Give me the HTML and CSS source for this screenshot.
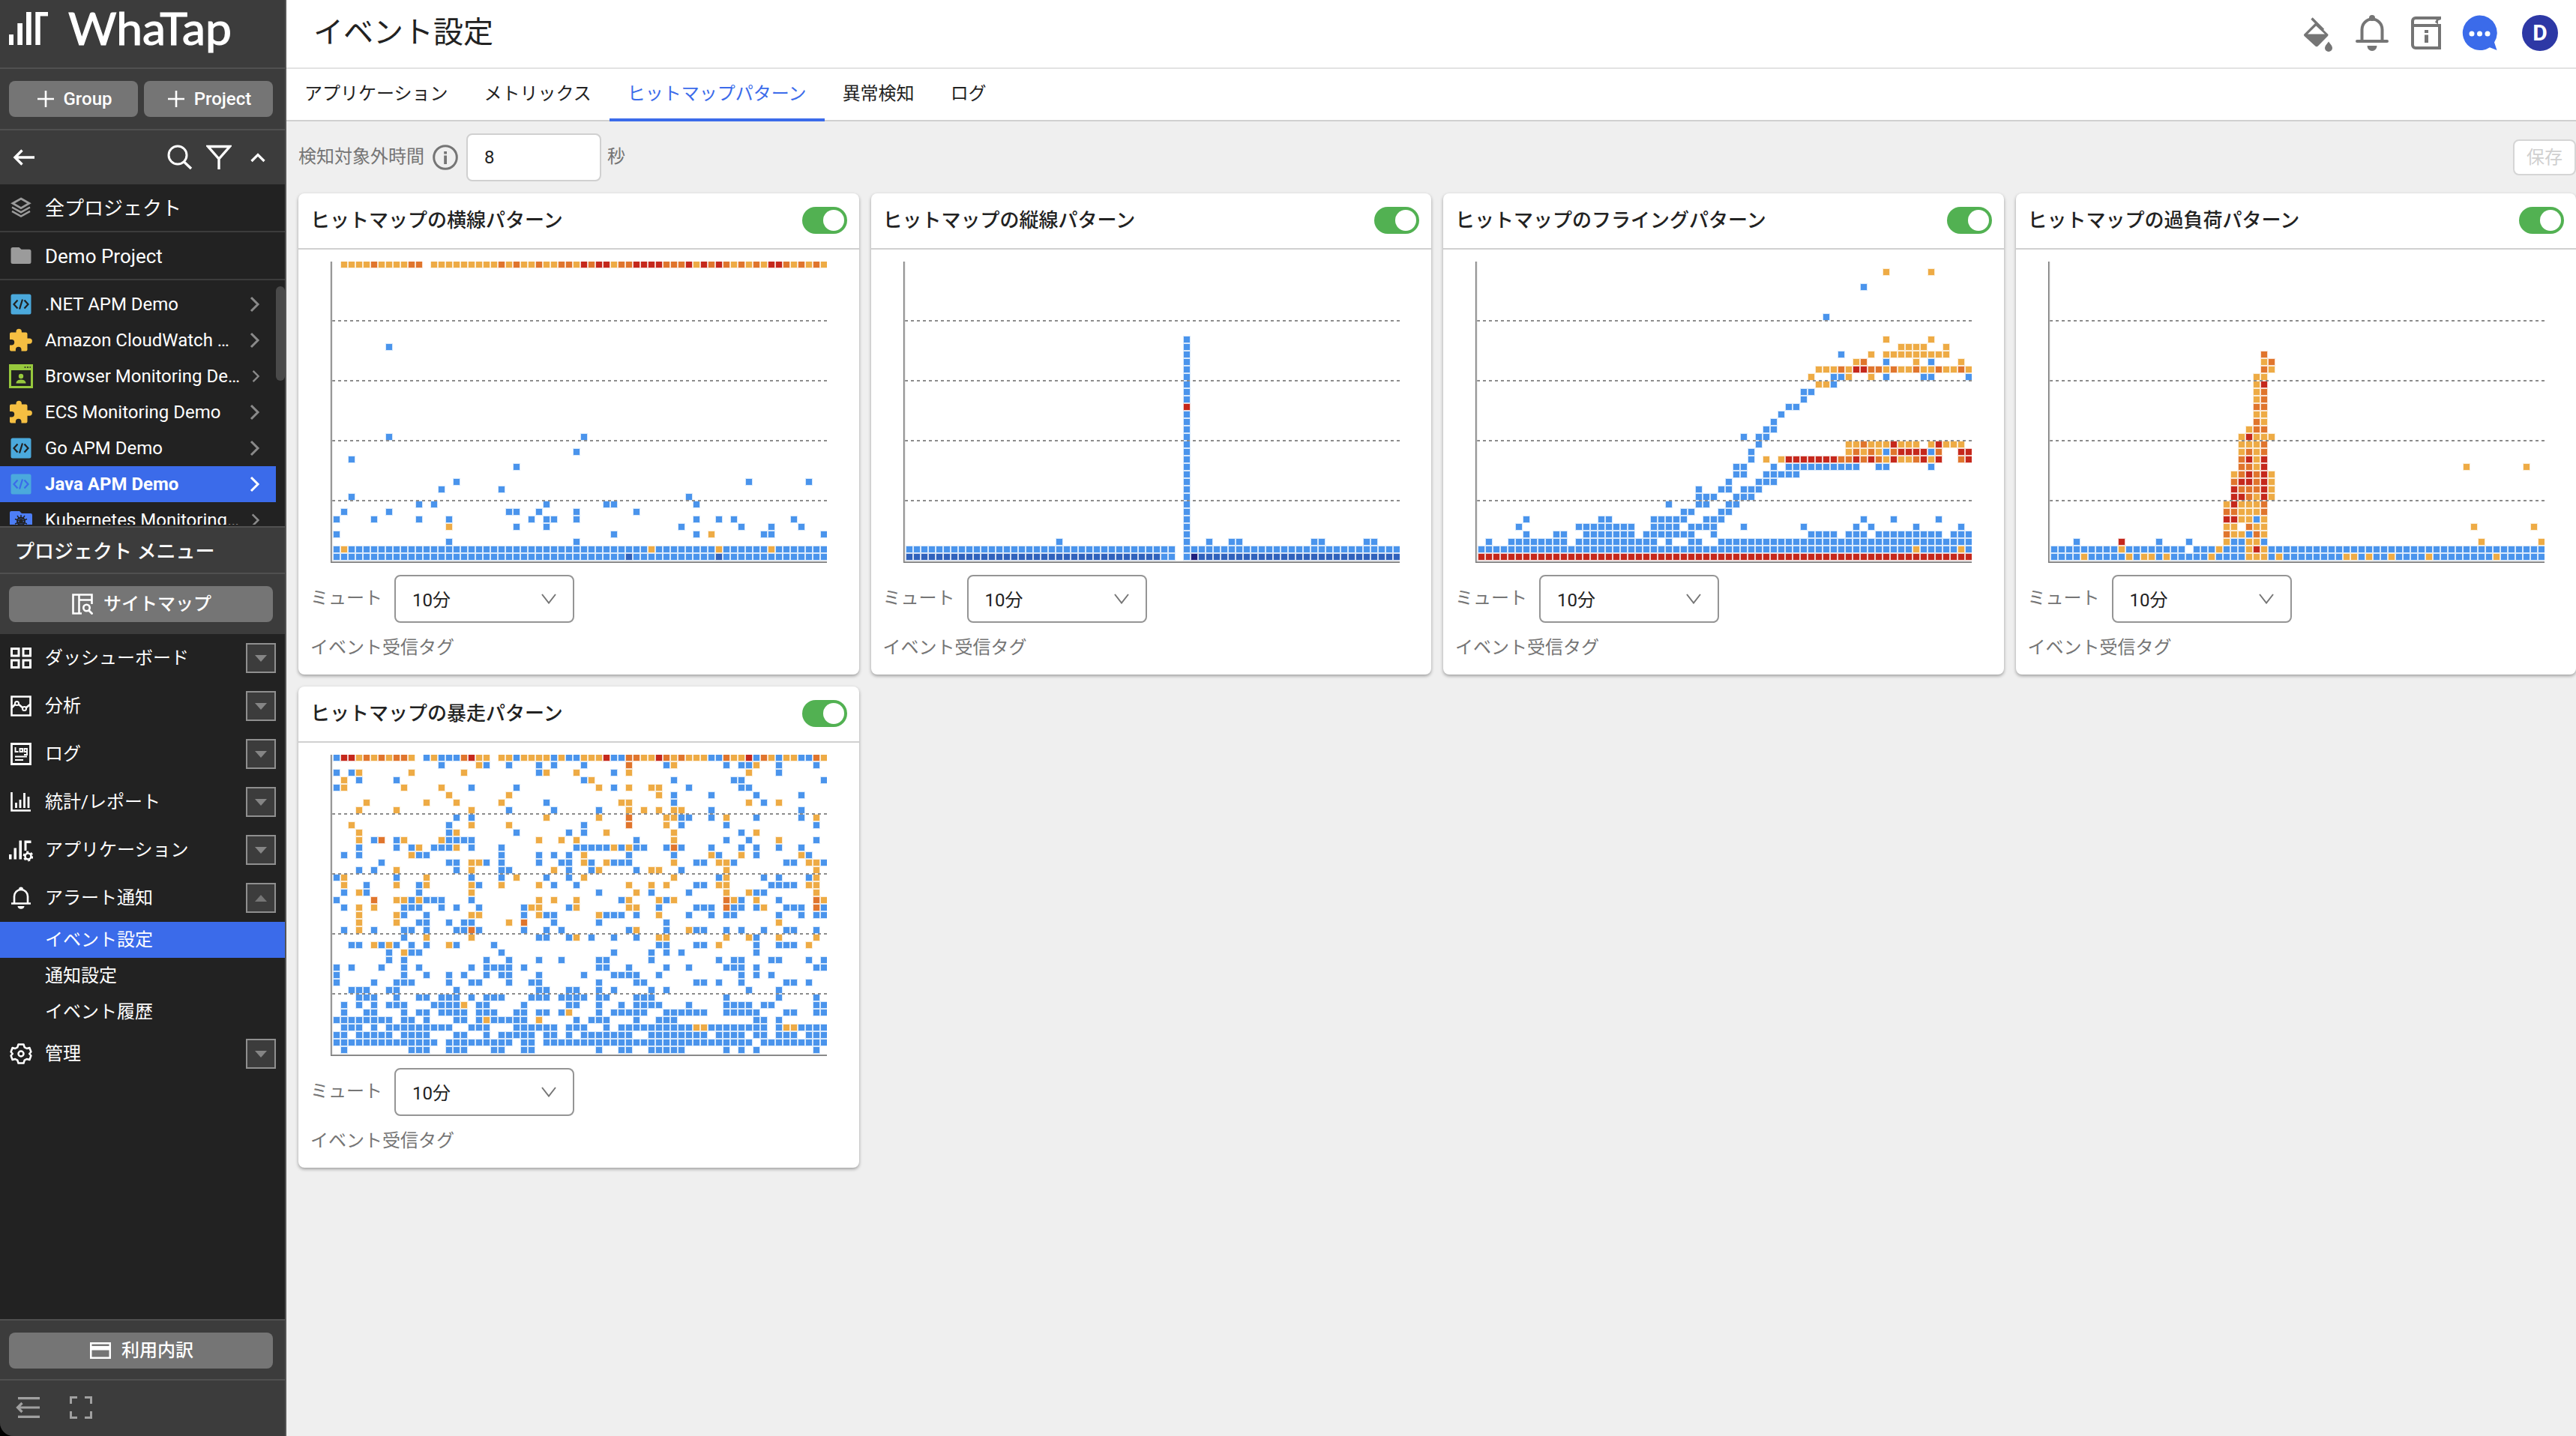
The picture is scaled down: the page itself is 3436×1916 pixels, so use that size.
FILE: index.html
```html
<!DOCTYPE html>
<html lang="ja">
<head>
<meta charset="utf-8">
<title>WhaTap - イベント設定</title>
<link rel="stylesheet" href="styles.css">
</head>
<body>
<svg class="sprite" aria-hidden="true">
  <symbol id="i-code" viewBox="0 0 32 32">
    <rect x="2.5" y="2.5" width="27" height="27" rx="2.5" fill="#4ba9dc"/>
    <path d="M11.5 10.5 6.5 16l5 5.5M20.5 10.5l5 5.5-5 5.5M18 9.5l-4 13" fill="none" stroke="currentColor" stroke-width="2.2"/>
  </symbol>
  <symbol id="i-puzzle" viewBox="0 0 32 32">
    <path fill="#f5bf42" d="M3 5.5h6.500V4.500a3.700 3.700 0 0 1 7.400 0V5.500H22.500a2 2 0 0 1 2 2V13.500h2.800a3.600 3.600 0 0 1 0 7.200H24.500V28.500a2 2 0 0 1-2 2H16.500V28.500a3.800 3.800 0 0 0-7.600 0v2H3a2 2 0 0 1-2-2V22.500H3.500a3.700 3.700 0 0 0 0-7.400H1V7.500a2 2 0 0 1 2-2z"/>
  </symbol>
  <symbol id="i-browser" viewBox="0 0 32 32">
    <path fill="#97c93d" fill-rule="evenodd" d="M0 0h32v32H0zM3 8v21h26V8z"/>
    <path d="M20.500 4h2M24 4h2M27.500 4h1.500" stroke="#222" stroke-width="1.600"/>
    <circle cx="16" cy="16" r="3.200" fill="#97c93d"/>
    <path d="M9.500 25.500c0-3.500 3-5 6.500-5s6.500 1.500 6.500 5z" fill="#97c93d"/>
  </symbol>
  <symbol id="i-kube" viewBox="0 0 32 32">
    <path fill="#4d7ef6" d="M3 4h11l3 3h12a2 2 0 0 1 2 2v21H1V6a2 2 0 0 1 2-2z"/>
    <g fill="none" stroke="#222" stroke-width="2"><circle cx="16" cy="17.500" r="5"/><path d="M16 9v17M8 14.500l16 6.500M8 21l16-6.500M11 25l10-15M11 10l10 15" stroke-width="1.400"/></g>
  </symbol>
  <symbol id="i-next" viewBox="0 0 14 24"><path d="M2 3l9 9-9 9" fill="none" stroke="currentColor" stroke-width="3"/></symbol>
  <symbol id="i-plus" viewBox="0 0 24 24"><path d="M12 1v22M1 12h22" stroke="currentColor" stroke-width="2.600"/></symbol>
  <symbol id="i-select" viewBox="0 0 20 14"><path d="M1 1l9 11.500L19 1" fill="none" stroke="#757575" stroke-width="2"/></symbol>
</svg>

<div class="app">
  <aside class="sidebar">
    <div class="brand">
      <svg class="logo" viewBox="0 0 320 90" role="img" aria-label="WhaTap">
        <path fill="#fff" d="M12 46h6v14h-6zM23.300 31h6.700v29h-6.700zM35 16h6.700v44H35zM47.300 16H64v5.500H53.700V60h-6.400z"/>
        <text class="wordmark" x="91" y="60" textLength="218" lengthAdjust="spacingAndGlyphs">WhaTap</text>
      </svg>
    </div>
    <div class="create-row">
      <button class="side-btn"><svg class="plus"><use href="#i-plus"/></svg>Group</button>
      <button class="side-btn"><svg class="plus"><use href="#i-plus"/></svg>Project</button>
    </div>
    <div class="tools">
      <svg class="back" viewBox="0 0 30 22"><path d="M29 11H3M12.500 1.500 3 11l9.500 9.500" fill="none" stroke="#fff" stroke-width="3.400"/></svg>
      <svg class="search" viewBox="0 0 34 34"><circle cx="14" cy="14" r="12" fill="none" stroke="#fff" stroke-width="3"/><path d="M22.500 23 32 32" stroke="#fff" stroke-width="3.400"/></svg>
      <svg class="filter" viewBox="0 0 34 34"><path d="M2.500 2.500h29L17 19zM17 18v15" fill="none" stroke="#fff" stroke-width="3.400"/></svg>
      <svg class="fold" viewBox="0 0 20 14"><path d="M1.500 12 10 3.500l8.500 8.500" fill="none" stroke="#fff" stroke-width="3.200"/></svg>
    </div>
    <div class="scope">
      <svg class="ico" viewBox="0 0 32 32"><path d="M16 4 27 10.300 16 16.600 5 10.300z" fill="none" stroke="#9b9b9b" stroke-width="2.800"/><path d="M4 15.500l12 6.700 12-6.700M4 20.800l12 6.700 12-6.700" fill="none" stroke="#9b9b9b" stroke-width="2.500"/></svg>
      <span>全プロジェクト</span>
    </div>
    <div class="scope">
      <svg class="ico" viewBox="0 0 32 32"><path fill="#9b9b9b" d="M5 5h8.500l3 2.800H27A2.500 2.500 0 0 1 29.500 10.300V24.500A2.500 2.500 0 0 1 27 27H5a2.500 2.500 0 0 1-2.500-2.500v-17A2.500 2.500 0 0 1 5 5z"/></svg>
      <span>Demo Project</span>
    </div>
    <div class="projects">
      <ul class="project-list">
        <li class="project"><svg class="ico"><use href="#i-code"/></svg><span>.NET APM Demo</span><svg class="next"><use href="#i-next"/></svg></li>
        <li class="project"><svg class="ico"><use href="#i-puzzle"/></svg><span>Amazon CloudWatch …</span><svg class="next"><use href="#i-next"/></svg></li>
        <li class="project"><svg class="ico"><use href="#i-browser"/></svg><span>Browser Monitoring De…</span><svg class="next"><use href="#i-next"/></svg></li>
        <li class="project"><svg class="ico"><use href="#i-puzzle"/></svg><span>ECS Monitoring Demo</span><svg class="next"><use href="#i-next"/></svg></li>
        <li class="project"><svg class="ico"><use href="#i-code"/></svg><span>Go APM Demo</span><svg class="next"><use href="#i-next"/></svg></li>
        <li class="project selected"><svg class="ico"><use href="#i-code"/></svg><span>Java APM Demo</span><svg class="next"><use href="#i-next"/></svg></li>
        <li class="project"><svg class="ico"><use href="#i-kube"/></svg><span>Kubernetes Monitoring…</span><svg class="next"><use href="#i-next"/></svg></li>
      </ul>
      <div class="scroll-thumb"></div>
    </div>
    <div class="menu-title">プロジェクト メニュー</div>
    <div class="sitemap-row">
      <button class="side-btn wide">
        <svg class="btn-ico" viewBox="0 0 28 28"><path d="M13 26.500H1.500v-25h25V14M9.500 1.500v25M9.500 8.500h17" fill="none" stroke="#fff" stroke-width="2.600"/><circle cx="19.500" cy="19" r="4.200" fill="none" stroke="#fff" stroke-width="2.600"/><path d="M22.500 22.500l5 5" stroke="#fff" stroke-width="2.800"/></svg>
        サイトマップ
      </button>
    </div>
    <nav class="menu">
      <div class="menu-item"><svg class="ico" viewBox="0 0 32 32"><path d="M3.500 3.500h9.500v9.500H3.500zM19 3.500h9.500v9.500H19zM3.500 19h9.500v9.500H3.500zM19 19h9.500v9.500H19z" fill="none" stroke="#fff" stroke-width="3"/></svg><span>ダッシューボード</span><i class="toggle-box"></i></div>
      <div class="menu-item"><svg class="ico" viewBox="0 0 32 32"><path d="M3.500 3.500h25v25h-25zM4 18l4.500-4.500M12.500 13.500l6 5M22.500 18.500 28 14" fill="none" stroke="#fff" stroke-width="2.600"/><circle cx="10.500" cy="12.500" r="2.500" fill="none" stroke="#fff" stroke-width="2"/><circle cx="20.500" cy="19.500" r="2.500" fill="none" stroke="#fff" stroke-width="2"/></svg><span>分析</span><i class="toggle-box"></i></div>
      <div class="menu-item"><svg class="ico" viewBox="0 0 32 32"><path d="M3.500 2.500h25v27h-25z" fill="none" stroke="#fff" stroke-width="2.800"/><path d="M8.500 7v6h4M14.500 9h3.500v4h-3.500zM24 13h-3.500V9H24v8h-4M8 19.500h16M8 24h11" fill="none" stroke="#fff" stroke-width="1.900"/></svg><span>ログ</span><i class="toggle-box"></i></div>
      <div class="menu-item"><svg class="ico" viewBox="0 0 32 32"><path d="M3.500 3v24.500H29" fill="none" stroke="#fff" stroke-width="2.600"/><path d="M9.500 17v7M15 13v11M20.500 4v20M26 9v15" stroke="#fff" stroke-width="2.800"/></svg><span>統計/レポート</span><i class="toggle-box"></i></div>
      <div class="menu-item"><svg class="ico" viewBox="0 0 32 32"><path fill="#fff" d="M0 22h3.500v6.500H0zM6.500 13.500H10v15H6.500zM13.500 3.500H17v25h-3.500zM20.500 3.500H29.500V7H23.500v10h-3z"/><circle cx="25.500" cy="24.500" r="4" fill="none" stroke="#fff" stroke-width="2.600"/><circle cx="25.500" cy="24.500" r="5.800" fill="none" stroke="#fff" stroke-width="2.200" stroke-dasharray="3 3.070"/></svg><span>アプリケーション</span><i class="toggle-box"></i></div>
      <div class="menu-item"><svg class="ico" viewBox="0 0 32 32"><path d="M7 23V14a9 9 0 0 1 18 0v9M3 23.500h26" fill="none" stroke="#fff" stroke-width="2.600"/><path d="M16 1.500a3 3 0 0 1 3 3h-6a3 3 0 0 1 3-3zM11.500 27h9a4.500 3.800 0 0 1-9 0z" fill="#fff"/></svg><span>アラート通知</span><i class="toggle-box open"></i></div>
      <div class="sub-item current">イベント設定</div>
      <div class="sub-item">通知設定</div>
      <div class="sub-item">イベント履歴</div>
      <div class="menu-item"><svg class="ico" viewBox="0 0 32 32"><path d="M12.500 3.500h7l1.200 3.800 3 1.700 3.700-1 2 5.500-2.200 2.500 2.200 2.500-2 5.500-3.700-1-3 1.700-1.200 3.800h-7l-1.200-3.800-3-1.700-3.700 1-2-5.500L4.800 16l-2.200-2.500 2-5.500 3.700 1 3-1.700z" fill="none" stroke="#fff" stroke-width="2.500" stroke-linejoin="round"/><circle cx="16" cy="16" r="3.500" fill="none" stroke="#fff" stroke-width="2.500"/></svg><span>管理</span><i class="toggle-box"></i></div>
    </nav>
    <div class="usage-row">
      <button class="side-btn wide">
        <svg class="btn-ico" viewBox="0 0 28 28"><path fill="#fff" fill-rule="evenodd" d="M0 3h28v22H0zM2.500 5.500v2.500h23V5.500zM2.500 13.500v9h23v-9z"/></svg>
        利用内訳
      </button>
    </div>
    <div class="foot">
      <svg class="collapse" viewBox="0 0 32 28"><path d="M3 1.700h29M5 14h27M3 26.300h29M8.500 8 2.500 14l6 6" fill="none" stroke="#a0a0a0" stroke-width="3.200"/></svg>
      <svg class="expand" viewBox="0 0 30 30"><path d="M1.500 10V1.500H10M20 1.500h8.500V10M28.500 20v8.500H20M10 28.500H1.500V20" fill="none" stroke="#a0a0a0" stroke-width="3"/></svg>
    </div>
  </aside>

  <main class="main">
    <header class="topbar">
      <h1>イベント設定</h1>
      <div class="top-icons">
        <svg class="t-bucket" viewBox="0 0 40 46"><path d="M17 7 33 22.500a1.800 1.800 0 0 1 0 2.500L20 38.300a3 3 0 0 1-4 0L1.500 25a1.800 1.800 0 0 1 0-2.500z" fill="#757575"/><path d="M17.300 11.500 6 22.500h23z" fill="#fff"/><path d="M11.500 1.500 27 17" stroke="#757575" stroke-width="3.400"/><path d="M34 32.500c3 4 5 6 5 8.500a5 5 0 0 1-10 0c0-2.500 2-4.500 5-8.500z" fill="#757575"/></svg>
        <svg class="t-bell" viewBox="0 0 44 48"><path d="M8.500 34V19.500a13.500 14 0 0 1 27 0V34" fill="none" stroke="#757575" stroke-width="4"/><path d="M2 35h40" stroke="#757575" stroke-width="4" stroke-linecap="round"/><circle cx="22" cy="4" r="4" fill="#757575"/><path d="M15.500 41h13a6.500 7 0 0 1-13 0z" fill="#757575"/></svg>
        <svg class="t-book" viewBox="0 0 40 44"><path d="M40 2H6a4 4 0 0 0-4 4v32a4 4 0 0 0 4 4h32V12H4" fill="none" stroke="#757575" stroke-width="4"/><path d="M33.500 2v3l-1.500 2.500 4 3V5.500L40 4V0z" fill="#757575"/><path d="M18 18h5v4h-5zM18 24.500h5V35h-5z" fill="#757575"/></svg>
        <svg class="t-chat" viewBox="0 0 48 48"><path fill="#3b6bea" d="M23.500 0.500a23.300 23.300 0 0 1 19.500 36L46.500 47 37 43.200A23.300 23.300 0 1 1 23.500 0.500z"/><circle cx="13" cy="25" r="3.500" fill="#fff"/><circle cx="23.500" cy="25" r="3.500" fill="#fff"/><circle cx="34" cy="25" r="3.500" fill="#fff"/></svg>
        <span class="avatar">D</span>
      </div>
    </header>
    <nav class="tabs">
      <a class="tab">アプリケーション</a>
      <a class="tab">メトリックス</a>
      <a class="tab active">ヒットマップパターン</a>
      <a class="tab">異常検知</a>
      <a class="tab">ログ</a>
    </nav>
    <div class="options">
      <span class="label">検知対象外時間</span>
      <svg class="info" viewBox="0 0 34 34"><circle cx="17" cy="17" r="15.300" fill="none" stroke="#757575" stroke-width="3"/><path d="M15.200 9h3.800v3.500h-3.800zM15.200 14.500h3.800V26h-3.800z" fill="#757575"/></svg>
      <input class="seconds" value="8">
      <span class="label">秒</span>
      <button class="save" disabled>保存</button>
    </div>
    <section class="cards">
      <article class="card">
        <div class="card-head"><h2>ヒットマップの横線パターン</h2><span class="switch"></span></div>
        <svg class="heatmap" data-pattern="horizontal" viewBox="0 0 662 402"></svg>
        <div class="mute"><span>ミュート</span><div class="select">10分<svg><use href="#i-select"/></svg></div></div>
        <div class="tag">イベント受信タグ</div>
      </article>
      <article class="card">
        <div class="card-head"><h2>ヒットマップの縦線パターン</h2><span class="switch"></span></div>
        <svg class="heatmap" data-pattern="vertical" viewBox="0 0 662 402"></svg>
        <div class="mute"><span>ミュート</span><div class="select">10分<svg><use href="#i-select"/></svg></div></div>
        <div class="tag">イベント受信タグ</div>
      </article>
      <article class="card">
        <div class="card-head"><h2>ヒットマップのフライングパターン</h2><span class="switch"></span></div>
        <svg class="heatmap" data-pattern="flying" viewBox="0 0 662 402"></svg>
        <div class="mute"><span>ミュート</span><div class="select">10分<svg><use href="#i-select"/></svg></div></div>
        <div class="tag">イベント受信タグ</div>
      </article>
      <article class="card">
        <div class="card-head"><h2>ヒットマップの過負荷パターン</h2><span class="switch"></span></div>
        <svg class="heatmap" data-pattern="overload" viewBox="0 0 662 402"></svg>
        <div class="mute"><span>ミュート</span><div class="select">10分<svg><use href="#i-select"/></svg></div></div>
        <div class="tag">イベント受信タグ</div>
      </article>
      <article class="card">
        <div class="card-head"><h2>ヒットマップの暴走パターン</h2><span class="switch"></span></div>
        <svg class="heatmap" data-pattern="surge" viewBox="0 0 662 402"></svg>
        <div class="mute"><span>ミュート</span><div class="select">10分<svg><use href="#i-select"/></svg></div></div>
        <div class="tag">イベント受信タグ</div>
      </article>
    </section>
  </main>
</div>
<script src="heatmap.js"></script>
</body>
</html>
```
FILE: styles.css
```css
* { box-sizing: border-box; }

body {
  margin: 0;
  font-family: Roboto, "Noto Sans CJK JP", sans-serif;
  font-size: 24px;
  line-height: 36px;
  color: #222;
  background: #efefef;
}

button, input { font: inherit; }
h1, h2, ul { margin: 0; padding: 0; list-style: none; }
.sprite { display: none; }

.app { display: flex; width: 3436px; height: 1916px; overflow: hidden; background: #000; }

/* Sidebar */
.sidebar {
  display: flex;
  flex-direction: column;
  flex: none;
  width: 382px;
  background: #222;
  border-right: 2px solid #555;
  border-bottom-left-radius: 18px;
  overflow: hidden;
  color: #fff;
}
.brand { height: 92px; background: #3c3c3c; border-bottom: 2px solid #505050; }
.logo { display: block; width: 320px; height: 90px; }
.wordmark { font-family: Lato, sans-serif; font-size: 60px; fill: #fff; stroke: #fff; stroke-width: 1.2px; }

.create-row { display: flex; gap: 8px; height: 82px; padding: 16px 16px 0 12px; background: #3c3c3c; border-bottom: 2px solid #505050; }
.side-btn {
  display: flex;
  align-items: center;
  justify-content: center;
  flex: 1;
  height: 48px;
  padding: 0 0 0 2px;
  border: 0;
  border-radius: 8px;
  background: #757575;
  color: #fff;
  font-weight: 500;
}
.plus { width: 24px; height: 24px; margin-right: 12px; }
.btn-ico { width: 28px; height: 28px; margin-right: 14px; }

.tools { display: flex; align-items: center; height: 72px; padding: 0 26px 0 17px; background: #3c3c3c; }
.back { width: 30px; height: 22px; margin-right: auto; }
.search { width: 34px; height: 34px; margin-right: 18px; }
.filter { width: 34px; height: 34px; margin-right: 25px; }
.fold { width: 20px; height: 14px; }

.scope { display: flex; align-items: center; gap: 16px; height: 64px; padding-left: 12px; border-bottom: 2px solid #3c3c3c; font-size: 26px; }
.scope span { padding-top: 2px; }
.ico { flex: none; width: 32px; height: 32px; }

.projects { display: flex; height: 326px; margin-bottom: 2px; padding-top: 8px; overflow: hidden; }
.project-list { width: 368px; }
.project { display: flex; align-items: center; gap: 16px; height: 48px; padding: 0 21px 0 12px; color: #222; }
.project span { flex: 1; color: #fff; white-space: nowrap; }
.project .next { width: 14px; height: 24px; color: #8a8a8a; }
.project.selected { background: #3b6bea; color: #3b6bea; font-weight: 700; }
.project.selected .next { color: #fff; }
.scroll-thumb { width: 12px; height: 126px; border-radius: 6px; background: #4a4a4a; }

.menu-title { height: 64px; padding: 14px 20px 12px; background: #3c3c3c; border-top: 2px solid #505050; border-bottom: 2px solid #505050; font-size: 26px; font-weight: 500; }
.sitemap-row { display: flex; height: 80px; padding: 16px 16px 0 12px; background: #3c3c3c; }

.menu { flex: 1; }
.menu-item { display: flex; align-items: center; gap: 16px; height: 64px; padding: 0 12px; }
.toggle-box {
  display: flex;
  align-items: center;
  justify-content: center;
  width: 40px;
  height: 40px;
  margin-left: auto;
  border: 2px solid #8f8f8f;
  background: #3c3c3c;
}
.toggle-box::before { content: ""; border: 8px solid transparent; border-top: 9px solid #858585; border-bottom: 0; }
.toggle-box.open::before { border-top: 0; border-bottom: 9px solid #757575; }
.sub-item { height: 48px; padding: 6px 0 6px 60px; }
.sub-item.current { background: #3b6bea; }

.usage-row { display: flex; height: 80px; padding: 16px 16px 0 12px; background: #3c3c3c; border-top: 2px solid #505050; }
.foot { display: flex; align-items: center; gap: 40px; height: 76px; padding: 0 0 2px 21px; background: #3c3c3c; border-top: 2px solid #505050; }
.collapse { width: 32px; height: 28px; }
.expand { width: 30px; height: 30px; }

/* Main area */
.main { flex: 1; background: #efefef; }
.topbar { display: flex; align-items: center; justify-content: space-between; height: 92px; padding: 0 24px 2px 36px; background: #fff; border-bottom: 2px solid #e3e3e3; }
.topbar h1 { font-size: 40px; font-weight: 400; line-height: 60px; }
.top-icons { display: flex; align-items: center; }
.t-bucket { width: 40px; height: 46px; margin: 3px 30px 0 0; }
.t-bell { width: 44px; height: 48px; margin-right: 30px; }
.t-book { width: 40px; height: 44px; margin-right: 28px; }
.t-chat { width: 48px; height: 48px; margin-right: 32px; }
.avatar { width: 48px; height: 48px; border-radius: 50%; background: #2d38a5; color: #fff; font-size: 30px; font-weight: 700; line-height: 48px; text-align: center; }

.tabs { display: flex; height: 70px; background: #fff; border-bottom: 2px solid #d0d0d0; }
.tab { height: 70px; padding: 15px 24px; white-space: nowrap; }
.tab.active { color: #3b6bea; border-bottom: 4px solid #3b6bea; }

.options { display: flex; align-items: center; height: 96px; padding-left: 16px; color: #757575; }
.label { padding-bottom: 3px; }
.info { width: 34px; height: 34px; margin: 0 11px; }
.seconds { width: 180px; height: 64px; margin-right: 8px; padding: 0 22px; border: 2px solid #d0d0d0; border-radius: 8px; background: #fff; color: #222; }
.save { width: 84px; height: 48px; margin-left: auto; padding: 0; border: 2px solid #d5d5d5; border-radius: 8px; background: #fff; color: #d0d0d0; line-height: 44px; }

.cards { display: grid; grid-template-columns: repeat(4, 747.5px); gap: 16px; padding-left: 16px; }
.card { height: 642px; border-radius: 8px; background: #fff; box-shadow: 0 2px 4px rgba(0, 0, 0, .35); }
.card-head { display: flex; align-items: center; justify-content: space-between; height: 75px; padding: 0 16px 1px; border-bottom: 2px solid #d0d0d0; }
.card-head h2 { font-size: 26px; font-weight: 500; }
.switch { display: flex; justify-content: flex-end; width: 60px; height: 36px; padding: 4px; border-radius: 18px; background: #52b152; }
.switch::before { content: ""; width: 28px; height: 28px; border-radius: 50%; background: #fff; }
.heatmap { display: block; width: 662px; height: 402px; margin: 16px 0 16px 43px; }
.mute { display: flex; align-items: center; gap: 16px; padding-left: 16px; color: #757575; }
.mute span { padding-bottom: 2px; }
.select { display: flex; align-items: center; justify-content: space-between; width: 240px; height: 64px; padding: 3px 22px 0; border: 2px solid #959595; border-radius: 8px; color: #222; }
.select svg { width: 20px; height: 14px; margin-bottom: 3px; }
.tag { padding: 15px 16px 11px; color: #757575; }

.level-b { fill: #4a94ec; stroke: #4a94ec; }
.level-d { fill: #3062bc; stroke: #3062bc; }
.level-n { fill: #1f1f7d; stroke: #1f1f7d; }
.level-y { fill: #eeab45; stroke: #eeab45; }
.level-o { fill: #e0752d; stroke: #e0752d; }
.level-r { fill: #c5281c; stroke: #c5281c; }
.cells { stroke-width: 2px; stroke-opacity: .22; paint-order: stroke; }
.guide { stroke: #8c8c8c; stroke-width: 2px; stroke-dasharray: 4 4; }
.axis { fill: none; stroke: #777; stroke-width: 1.4px; }
.axis-inner { fill: none; stroke: #c4c4c4; stroke-width: 1px; }
```
FILE: heatmap.js
```js
// Each pattern maps a row (0 = slowest) to its cells: a letter sets the level,
// the numbers after it are columns or column ranges. Later entries win.
const PATTERNS = {
  horizontal: {
    0: 'y 1-65 o 5 10 11 22 24 27 30 31 34 38 39 44-46 50 52 54 56 60 62 64 r 33 35 36 40-43 47 49 51 58 59 x 12',
    11: 'b 7', 23: 'b 7 33', 25: 'b 32', 26: 'b 2', 27: 'b 24', 29: 'b 16 55 63', 30: 'b 14 22', 31: 'b 2 47',
    32: 'b 11 13 28 36 37 48', 33: 'b 1 7 23 24 27 32 40', 34: 'b 0 5 11 15 26 28 29 32 48 51 53 61',
    35: 'b 24 28 46 54 58 62 y 15', 36: 'b 0 37 48 57 58 65 y 50', 37: 'b 15 32',
    38: 'b 0-65 y 1 42 51 58', 39: 'b 0-65 d 39 51'
  },
  vertical: {
    ...Object.fromEntries(Array.from({ length: 27 }, (_, i) => [i + 10, i === 9 ? 'r 37' : 'b 37'])),
    37: 'b 20 37 40 43 44 54 55 61 62', 38: 'b 0-35 37-65', 39: 'd 0-33 b 34 35 37 n 38 d 39-65'
  },
  flying: {
    1: 'y 54 60', 3: 'b 51', 7: 'b 46', 10: 'y 54 60', 11: 'y 56-59 62', 12: 'b 48 y 52 54-62',
    13: 'y 50 58 64 o 51 b 54 60', 14: 'y 45-65 o 48 52 53 55 58 61 64 r 50 51',
    15: 'y 44 49 52 b 47 48 54 59 60 65', 16: 'y 45 46 b 47', 17: 'b 43 44', 18: 'b 43', 19: 'b 41 42', 20: 'b 40',
    21: 'b 39', 22: 'b 38 39', 23: 'b 35 37 38', 24: 'b 37 y 49-58 60 62-64 o 51 r 55 61',
    25: 'b 36 54 60 y 49 51 53 o 50 52 55 61 r 56-59 64 65',
    26: 'b 36 y 38 40 54 56 57 60 r 41-47 50 52 55 59 61 65 o 48 49 51 53 58 64',
    27: 'b 34 35 39 41-50 53 54 60', 28: 'b 34 35 38-42', 29: 'b 33 37-39', 30: 'b 29 32 33 35-37',
    31: 'b 29-31 34-36', 32: 'b 25 29 30 33 34', 33: 'b 27 28 32 33', 34: 'b 6 16 17 23-27 30-32 51 55 61',
    35: 'b 5 13-20 23-26 28-31 35 43 50 52 58 64', 36: 'b 6 10 11 14-20 22-28 31 44-47 49-51 53-61 63-65',
    37: 'b 1 4-11 13-23 25 28 29 32-65', 38: 'b 0-65 y 58 64', 39: 'r 0-65'
  },
  overload: {
    12: 'o 28', 13: 'y 28 o 29', 14: 'o 28 y 29', 15: 'y 27 28', 16: 'y 27 r 28', 17: 'y 27 o 28', 18: 'y 27 o 28',
    19: 'o 27 28', 20: 'y 27 28', 21: 'o 27 y 28', 22: 'y 26 o 27 28', 23: 'y 25 27-29 r 26', 24: 'y 25-27 o 28',
    25: 'y 25 27 o 26 28', 26: 'o 25 r 26 28 y 27', 27: 'o 25 26 y 27 55 63 r 28', 28: 'y 24 29 o 25 27 r 26 28',
    29: 'o 24 27 r 25 26 28 y 29', 30: 'r 24 28 o 25-27 y 29', 31: 'r 24 25 28 o 26 y 27 29', 32: 'y 23 25-27 r 24 o 28',
    33: 'o 23 24 28 y 25-27', 34: 'r 23 24 y 25 26 28 b 27', 35: 'y 23 24 27 28 56 64 o 26', 36: 'o 23 27 y 24 25 28 b 26',
    37: 'b 3 14 18 24 25 28 r 9 y 23 26 27 57 65', 38: 'b 0-17 19-65 y 9 22 26 28 r 27',
    39: 'b 0-65 y 4 10 12 13 15 21 26-28 30 39 40 42 45 50 59'
  },
  surge: {
    0: 'y 0-65 b 0 12 14-16 24 29 31 32 37 38 50 51 56 59 62 63 r 1 2 18 36 43 55 o 4 6 8 9 17 39 40 44 46 52 57 64 x 11 21',
    1: 'b 14 20 23 27 29 33 44 52 54 55 59 64 y 19 45 56 o 39',
    2: 'b 0 2 27 37 59 y 3 10 17 28 32 39 55',
    3: 'y 1 34 b 3 8 33 45 53 54 65',
    4: 'b 0 18 24 37 47 54 55 y 1 9 14 35 39 42 43',
    5: 'y 15 23 43 b 45 50 56 62',
    6: 'y 4 12 16 22 38 39 55 59 b 28 45 57',
    7: 'y 3 8 18 39 41 43 45 46 b 23 29 35 50 62',
    8: 'b 16 18 46 47 50 56 62 y 28 35 44 45 52 64 o 39',
    9: 'y 2 18 23 44 b 15 33 46 52 64 o 39',
    10: 'y 3 16 36 45 56 b 15 24 31 33 54',
    11: 'y 3 9 14 27 30 32 45 59 b 5 8 15-18 40 52 55 64 o 6',
    12: 'b 3 8 10 13-15 18 22 32-36 38 40 41 44 46 50 54 56 59 62 y 11 16 37 39 o 45',
    13: 'b 1 3 11 12 22 27 29 31 39 45 51 56 63 y 10 33 50 54 62',
    14: 'b 6 15 16 20 22 27 30 31 34 37-39 48 49 53 60 61 65 y 18 19 33 36 45 51 52 63 64',
    15: 'b 3 5 16 22 23 31 34 40 46 y 8 18 29 35 42 43 52 64',
    16: 'b 0 8 18 22 28 31 51 57 59 63 y 1 12 24 33 45 52 64',
    17: 'y 1 8 12 18 22 27 39 42 44 51 52 63 64 b 4 11 19 29 32 48 49 58-61',
    18: 'b 1 4 11 35 42 47 56 57 y 3 18 40 52 55 64',
    19: 'b 0 10 12-14 18 38 44 54 59 o 5 52 64 y 8 9 11 27 29 32 39 43 45 53 56 65',
    20: 'b 1 9-11 14 16 19 25 31 43 48-50 53 54 56 60-62 65 y 3 5 26 27 32 39 40 57 o 52 64',
    21: 'y 3 8 18 19 27 35 43 b 9 12 25 28 29 36-38 40 47 50 52 53 59 62 64 65',
    22: 'y 3 8 23 59 b 11 12 15 17 18 29 35 44 o 25',
    23: 'b 1 5 9 10 12 16 17 19 25 28 30 39 44 48 49 52 54 57 60 61 64 y 3 40 47 o 18',
    24: 'b 9 27 28 31 34 37 40 56 y 12 18 32 43 44 52 55 59 64',
    25: 'b 2 3 6 8 10 12 16 21 43 44 48 49 56 59-61 y 5 7 15 51 63',
    26: 'b 7 10 11 22 37 42 44 46 56 y 9',
    27: 'b 7 9 20 23 27 30 35 36 42 51 53 54 58 59 63 65',
    28: 'b 0 2 6 9 11 18 20-23 25 35 36 39 44 47 52-54 56 64 65',
    29: 'b 0 9 12 15 17 20 22 23 27 33 37-40 43 54 56 58',
    30: 'b 0 5 8-10 15 18 19 23 26 27 35 40 41 48 49 51 54 60 61 63',
    31: 'b 2-4 7 8 16 27 28 31 32 35 37 42 44 55 59',
    32: 'b 3-5 8 11 12 14-16 18 20-22 26-28 30-33 35 36 40-42 52 59 64',
    33: 'b 1 3 5 7-9 13-16 19 20 25 31 32 35 38 40-43 47 52-55 57 58 64 65 y 17',
    34: 'b 1 4 5 9 11 12 14-17 19-21 24 25 27 28 30 35 37-41 44-49 52-56 60 61 64 65 y 31',
    35: 'b 0-7 9 10 12 16 17 19 21-25 32 34-36 40 43-45 56 57 59 y 20 27',
    36: 'b 1-3 5 7-15 18-20 24-29 31-33 36 38-47 50-57 59 62-65 y 48 49 60 61',
    37: 'b 0 1 3-7 9-12 16 17 20 22-26 28 29 31 33-39 42-49 51-54 56 57 59-61 63-65',
    38: 'b 0-13 15-23 25 26 28-55 57-65',
    39: 'b 1 10-12 15-17 21 22 25 26 35 38 39 42-46 52 54 56 64'
  }
};

const COLUMNS = 66;

function parseRow(spec) {
  const cells = new Array(COLUMNS).fill('x');
  let level = 'x';
  for (const token of spec.split(' ')) {
    if (/[a-z]/.test(token)) { level = token; continue; }
    const [from, to = from] = token.split('-').map(Number);
    for (let c = from; c <= to; c++) cells[c] = level;
  }
  return cells;
}

function draw(svg) {
  const paths = {};
  for (const [row, spec] of Object.entries(PATTERNS[svg.dataset.pattern])) {
    parseRow(spec).forEach((level, column) => {
      if (level === 'x') return;
      paths[level] = (paths[level] || '') + `M${4 + column * 10} ${row * 10}h8v8h-8z`;
    });
  }
  const cells = Object.entries(paths).map(([level, d]) => `<path class="cells level-${level}" d="${d}"/>`).join('');
  svg.innerHTML = cells +
    '<path class="guide" d="M2 79H662M2 159H662M2 239H662M2 319H662"/>' +
    '<path class="axis-inner" d="M1.8 0V400.2H662"/><path class="axis" d="M0.7 0V401.3H662"/>';
}

document.querySelectorAll('.heatmap').forEach(draw);
```
